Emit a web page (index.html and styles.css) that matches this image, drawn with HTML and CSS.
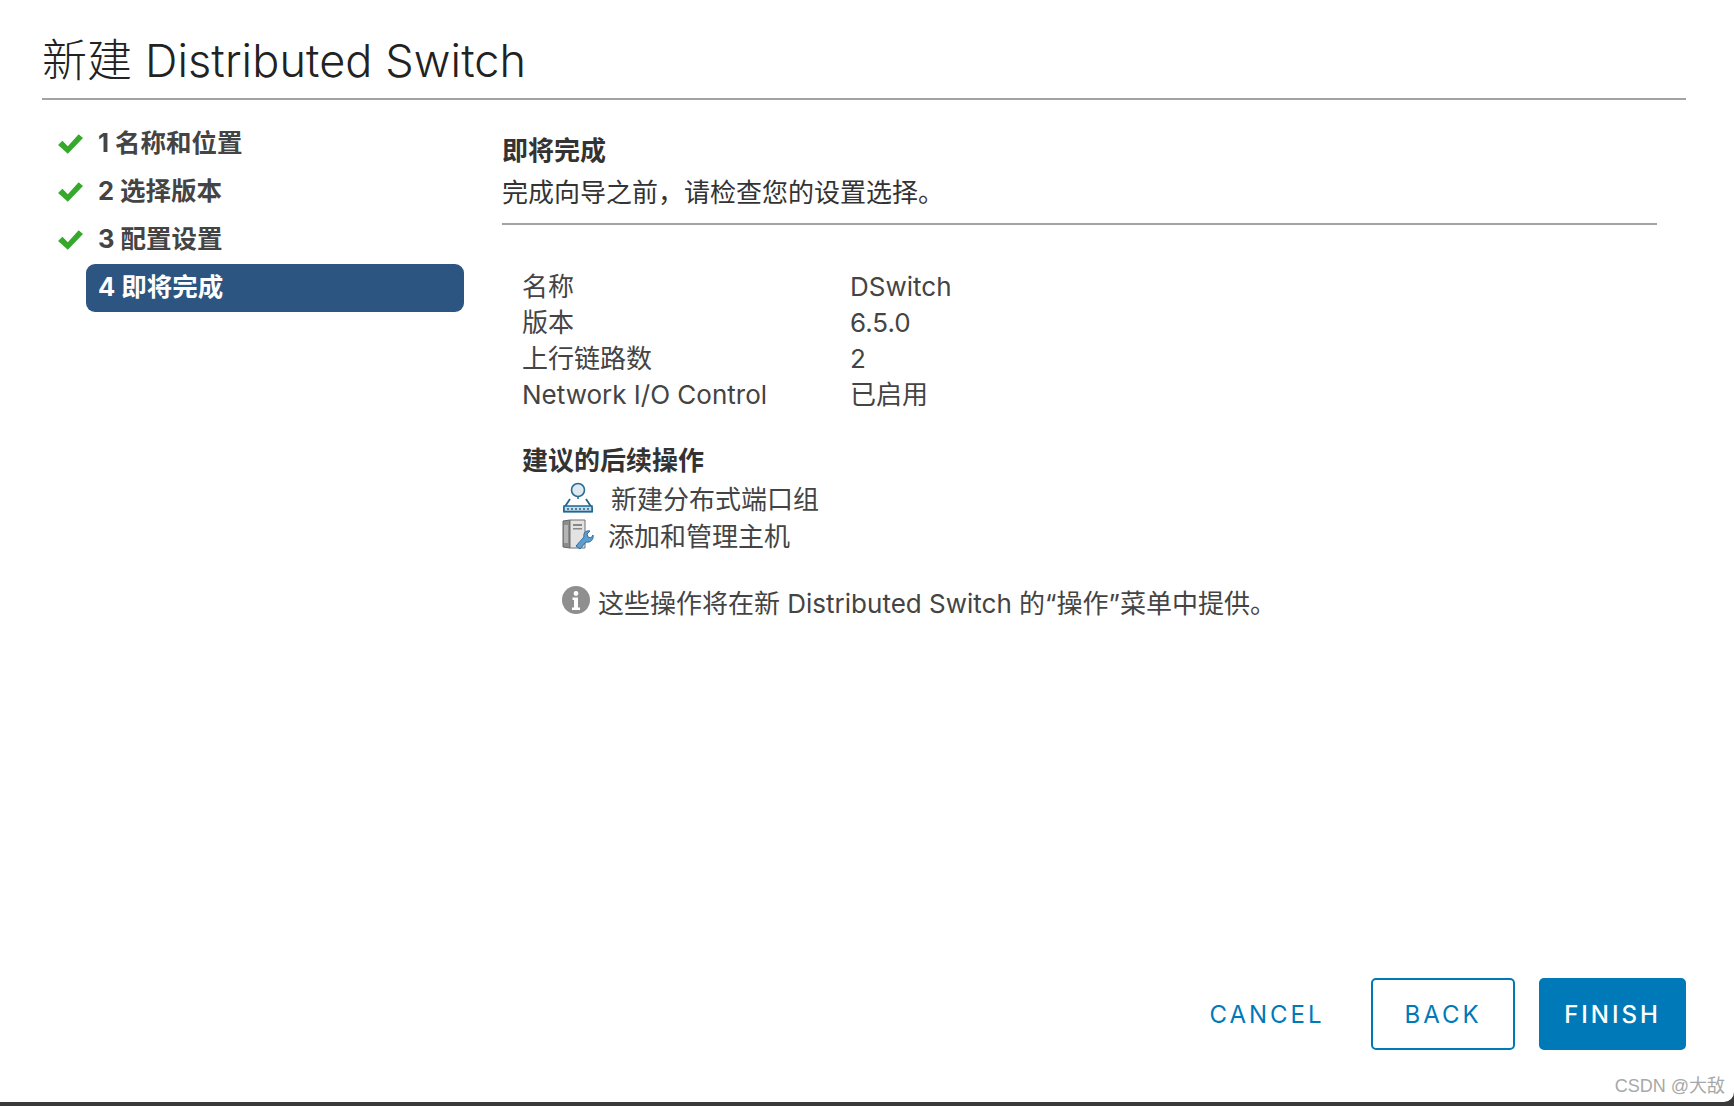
FILE: index.html
```html
<!DOCTYPE html>
<html lang="zh-CN">
<head>
<meta charset="utf-8">
<title>新建 Distributed Switch</title>
<link rel="stylesheet" href="styles.css">
</head>
<body>
<div class="dialog">
  <h1 class="title">新建 Distributed Switch</h1>
  <div class="main">
    <ul class="steps">
      <li class="step"><svg class="check" viewBox="0 0 24 20"><path d="M1 11l4-4 5 5L20 1l4 3.500L10 19z" fill="#38a82c"/></svg><span class="step-label">1 名称和位置</span></li>
      <li class="step"><svg class="check" viewBox="0 0 24 20"><path d="M1 11l4-4 5 5L20 1l4 3.500L10 19z" fill="#38a82c"/></svg><span class="step-label">2 选择版本</span></li>
      <li class="step"><svg class="check" viewBox="0 0 24 20"><path d="M1 11l4-4 5 5L20 1l4 3.500L10 19z" fill="#38a82c"/></svg><span class="step-label">3 配置设置</span></li>
      <li class="step"><span class="check"></span><span class="step-label active">4 即将完成</span></li>
    </ul>
    <section class="content">
      <h2 class="heading">即将完成</h2>
      <p class="sub">完成向导之前，请检查您的设置选择。</p>
      <dl class="summary">
        <dt>名称</dt><dd>DSwitch</dd>
        <dt>版本</dt><dd>6.5.0</dd>
        <dt>上行链路数</dt><dd>2</dd>
        <dt>Network I/O Control</dt><dd>已启用</dd>
      </dl>
      <h3 class="next-title">建议的后续操作</h3>
      <div class="action">
        <svg class="action-icon" viewBox="0 0 32 32"><circle cx="16" cy="9" r="6.500" fill="#dfe9f1" stroke="#2b6a94" stroke-width="1.600"/><path d="M16 15.500v5M10 20h12" stroke="#2b6a94" stroke-width="1.600" fill="none"/><path d="M8 18L2 27v3.500h28V27l-6-9" fill="#fff" stroke="#1f6691" stroke-width="1.800"/><path d="M2 25h28v5.500H2z" fill="#c8dbe8" stroke="#1f6691" stroke-width="1.500"/><path d="M6 27v2M10 27v2M14 27v2M18 27v2M22 27v2M26 27v2" stroke="#1f6691" stroke-width="1.500"/></svg>
        <span>新建分布式端口组</span>
      </div>
      <div class="action action-host">
        <svg class="action-icon" viewBox="0 0 32 32"><path d="M1 3l7-1v28l-7-1z" fill="#8d8d8d" stroke="#666"/><path d="M8 2h15v28H8z" fill="#e3e3e3" stroke="#707070"/><path d="M11 6h9v2h-9zM11 10h9v1.500h-9z" fill="#888"/><path d="M3 7v18M5 7v18" stroke="#ddd" stroke-width="1"/><path d="M14 28l8-9c-1-4 2-7 6-6l-3 3 1 3 3 1 2-3c1 5-3 8-7 7l-6 7z" fill="#5c9ecf" stroke="#316d9d" stroke-width="1"/></svg>
        <span>添加和管理主机</span>
      </div>
      <div class="note">
        <svg class="info" viewBox="0 0 28 28"><circle cx="14" cy="14" r="14" fill="#8f8f8f"/><circle cx="14" cy="7.500" r="2.400" fill="#fff"/><path d="M10.500 11.500h5.500v10h2v2.500h-8v-2.500h2v-7.500h-1.500z" fill="#fff"/></svg>
        <span>这些操作将在新 Distributed Switch 的“操作”菜单中提供。</span>
      </div>
    </section>
  </div>
  <div class="footer">
    <button class="btn btn-link">CANCEL</button>
    <button class="btn btn-outline">BACK</button>
    <button class="btn btn-primary">FINISH</button>
  </div>
  <div class="watermark">CSDN @大敌</div>
</div>
</body>
</html>
```
FILE: styles.css
```css
* { box-sizing: border-box; }
html, body { margin: 0; height: 100%; background: #3a3a3a; }
body { font-family: Inter, "Noto Sans CJK SC", sans-serif; color: #444; overflow: hidden; }
.dialog {
  position: relative;
  height: 1102px;
  background: #fff;
  border-radius: 0 0 10px 0;
  padding: 0 48px 52px 42px;
  display: flex;
  flex-direction: column;
}
.title {
  margin: 0;
  height: 100px;
  padding-top: 29px;
  font-size: 45px;
  line-height: 64px;
  font-weight: 300;
  color: #222;
  border-bottom: 2px solid #a3a3a3;
  letter-spacing: 0.1px;
}
.main { flex: 1; display: flex; min-height: 0; }
.steps { list-style: none; margin: 20px 0 0; padding: 0 0 0 15px; width: 460px; }
.step { display: flex; align-items: center; height: 48px; }
.check { width: 26px; height: 22px; flex: none; margin-right: 3px; }
.step-label {
  flex: 0 0 378px;
  height: 48px;
  line-height: 46px;
  padding-left: 12px;
  border-radius: 9px;
  font-size: 25.500px;
  font-weight: 700;
  color: #444;
}
.step-label.active { background: #2c5582; color: #fff; }
.content { flex: 1; padding-right: 29px; }
.heading { margin: 33px 0 0; font-size: 26px; line-height: 36px; font-weight: 700; color: #333; }
.sub {
  margin: 6px 0 0;
  font-size: 26px;
  line-height: 36px;
  color: #333;
  height: 50px;
  border-bottom: 2px solid #a3a3a3;
}
.summary {
  display: grid;
  grid-template-columns: 328px 1fr;
  grid-auto-rows: 36px;
  margin: 44px 0 0 20px;
  font-size: 26px;
  line-height: 36px;
}
.summary dt, .summary dd { margin: 0; white-space: nowrap; }
.next-title { margin: 30px 0 0 20px; font-size: 26px; line-height: 36px; font-weight: 700; color: #333; }
.action { display: flex; align-items: center; height: 36px; margin-left: 60px; font-size: 26px; }
.action-icon { width: 32px; height: 32px; flex: none; margin-right: 17px; }
.action-host { margin-top: 1px; }
.action-host .action-icon { margin-right: 14px; }
.note { display: flex; align-items: center; margin: 34px 0 0 60px; font-size: 26px; line-height: 36px; white-space: nowrap; }
.info { width: 28px; height: 28px; margin-right: 8px; flex: none; position: relative; top: -4px; }
.footer { display: flex; justify-content: flex-end; align-items: center; gap: 24px; }
.btn {
  height: 72px;
  font-family: inherit;
  font-size: 24px;
  letter-spacing: 3px;
  border-radius: 5px;
  color: #0079b8;
  background: #fff;
  border: 2px solid #0079b8;
  font-weight: 500;
}
.btn-link { border: 0; width: 152px; margin-right: 4px; font-weight: 400; padding: 0; }
.btn-outline { width: 144px; font-weight: 400; padding: 0; }
.btn-primary { width: 147px; background: #0079b8; color: #fff; padding: 0; }
.watermark {
  position: absolute;
  right: 9px;
  bottom: 2px;
  font-family: "Liberation Sans", "Noto Sans CJK SC", sans-serif;
  font-size: 18px;
  line-height: 28px;
  color: #a8a8a8;
}
```
